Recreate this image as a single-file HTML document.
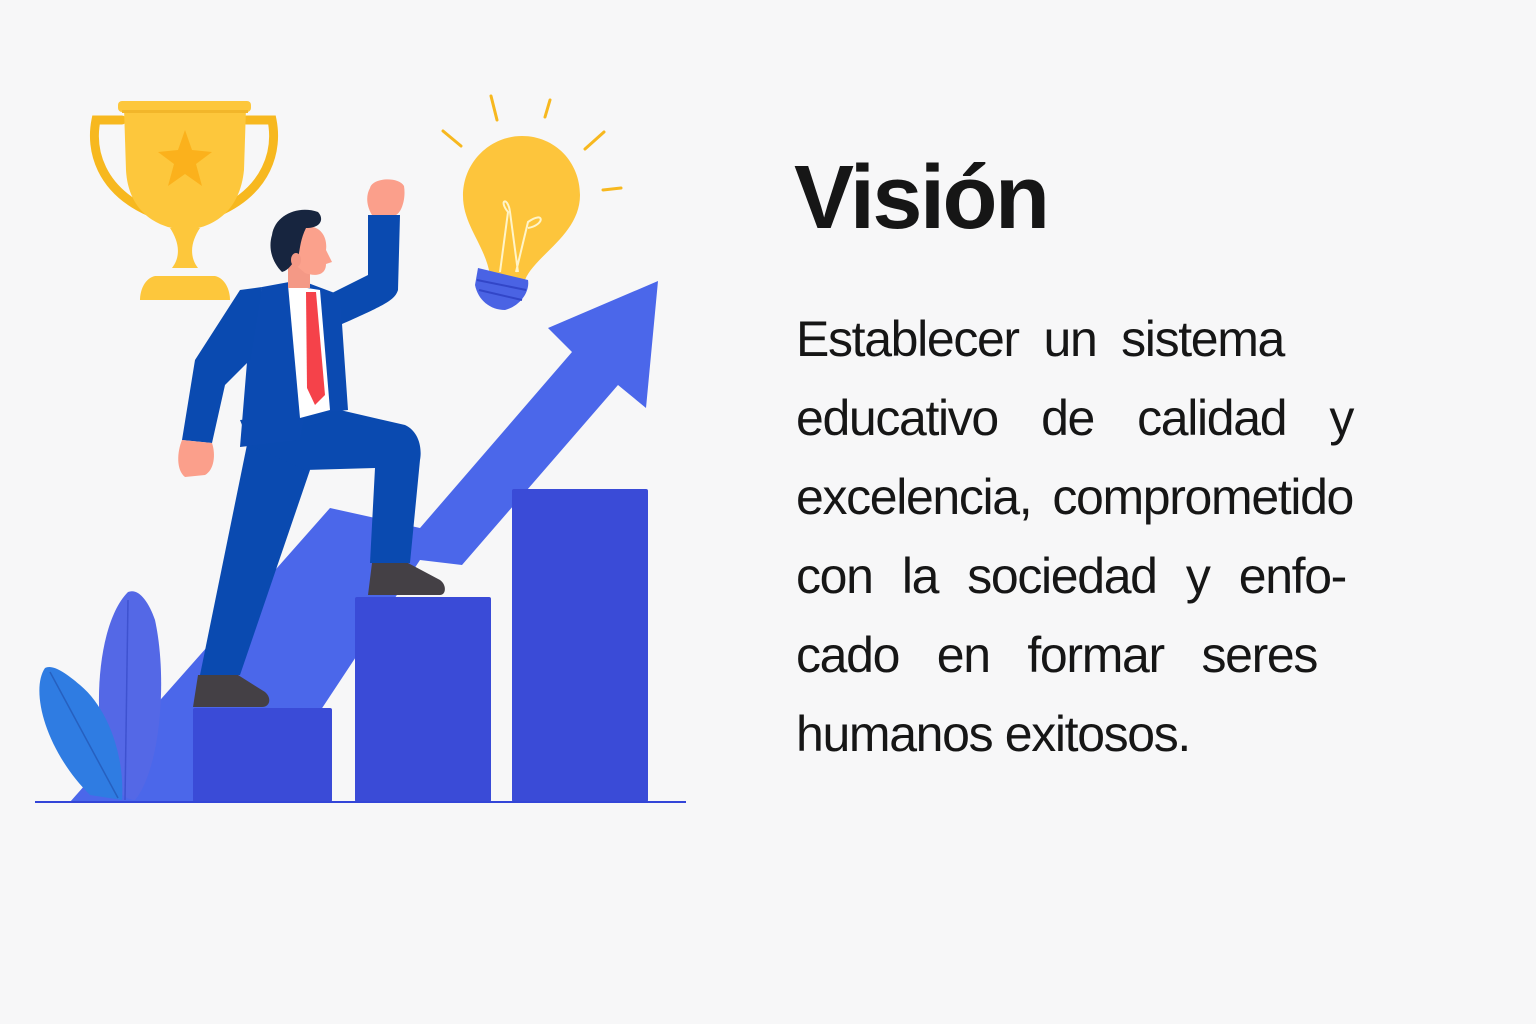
<!DOCTYPE html>
<html><head><meta charset="utf-8"><style>
html,body{margin:0;padding:0;background:#f7f7f8;}
body{width:1536px;height:1024px;position:relative;overflow:hidden;font-family:"Liberation Sans",sans-serif;color:#161616;}
h1{position:absolute;left:794px;top:143px;margin:0;font-size:90px;font-weight:700;letter-spacing:-2.5px;line-height:110px;}
.p{position:absolute;left:796px;top:300px;font-size:50px;letter-spacing:-1.35px;line-height:79px;}
.l{display:flex;justify-content:space-between;height:79px;white-space:nowrap;}
</style></head><body>
<svg width="1536" height="1024" style="position:absolute;left:0;top:0">
<polygon points="70,802 330,508 420,528 572,352 548,328 658,281 646,408 618,385 462,565 420,560 260,802" fill="#4b67ea"/>
<path d="M128,592 C100,620 92,700 105,760 C112,790 125,800 135,800 C160,770 168,680 155,620 C148,600 138,588 128,592Z" fill="#5468e6"/>
<path d="M128,600 L125,800" stroke="#3e52d0" stroke-width="1.5" fill="none"/>
<path d="M45,668 C30,690 45,750 90,795 L122,800 C125,760 110,710 80,685 C65,672 52,664 45,668Z" fill="#2f7ce2"/>
<path d="M50,672 L118,798" stroke="#2660c0" stroke-width="1.5" fill="none"/>
<rect x="193" y="708" width="139" height="94" rx="2" fill="#3a4bd7"/>
<rect x="355" y="597" width="136" height="205" rx="2" fill="#3a4bd7"/>
<rect x="512" y="489" width="136" height="313" rx="2" fill="#3a4bd7"/>
<rect x="35" y="801" width="651" height="2" fill="#3345d8"/>
<path d="M122,120 L96,120 C90,150 100,190 150,212" stroke="#f7b81f" stroke-width="9" fill="none" stroke-linecap="round"/>
<path d="M246,120 L272,120 C278,150 268,190 218,212" stroke="#f7b81f" stroke-width="9" fill="none" stroke-linecap="round"/>
<path d="M124,108 L246,108 L244,170 C240,210 215,228 185,230 C155,228 128,210 126,170Z" fill="#fdc73c"/>
<rect x="118" y="101" width="133" height="11" rx="4" fill="#fdc73c"/>
<rect x="122" y="110" width="126" height="3" fill="#f2b62a"/>
<polygon points="185,130 192,150 212,152 196,164 202,186 185,174 168,186 174,164 158,152 178,150" fill="#fbb11c"/>
<path d="M170,228 L200,228 C192,240 188,255 198,268 L172,268 C182,255 178,240 170,228Z" fill="#fdc73c"/>
<path d="M155,276 L215,276 C225,278 230,290 230,300 L140,300 C140,290 145,278 155,276Z" fill="#fdc73c"/>
<g stroke="#f7b81f" stroke-width="3" stroke-linecap="round">
<line x1="491" y1="96" x2="497" y2="120"/><line x1="550" y1="100" x2="545" y2="117"/>
<line x1="443" y1="131" x2="461" y2="146"/><line x1="604" y1="132" x2="585" y2="149"/><line x1="603" y1="190" x2="621" y2="188"/>
</g>
<path d="M522,136 C490,136 463,162 463,196 C463,225 485,245 490,275 L525,280 C535,255 580,235 580,195 C580,162 555,136 522,136Z" fill="#fdc53c"/>
<path d="M500,272 L508,212 C498,200 508,196 510,212 L518,272 M516,272 L528,222 C545,210 545,225 528,228" stroke="#fff4c8" stroke-width="2" fill="none"/>
<path d="M478,268 L528,280 C530,292 520,306 505,310 C490,310 478,300 475,285Z" fill="#4a63e4"/>
<g stroke="#3246c8" stroke-width="2"><line x1="477" y1="280" x2="526" y2="290"/><line x1="479" y1="290" x2="522" y2="300"/></g>
<polygon points="250,430 300,440 310,470 240,675 200,675" fill="#0a4ab0"/>
<path d="M240,420 L340,410 L405,425 C420,432 422,450 420,460 L410,563 L370,563 L375,468 L305,470 L250,445Z" fill="#0a4ab0"/>
<path d="M372,563 L408,563 L440,580 C447,585 446,595 440,595 L368,595Z" fill="#444045"/>
<path d="M198,675 L238,675 L265,692 C272,698 270,707 262,707 L193,707Z" fill="#444045"/>
<path d="M318,300 L368,275 L368,215 L400,215 L398,290 C395,300 385,305 340,325Z" fill="#0a4ab0"/>
<path d="M370,188 C372,178 398,176 404,186 C406,198 402,212 396,215 L372,215 C366,205 366,195 370,188Z" fill="#fb9f8b"/>
<path d="M262,287 L300,280 L340,295 L348,410 L305,415 L300,440 L240,447 L248,350Z" fill="#0b4ab1"/>
<polygon points="288,285 320,290 330,410 300,418" fill="#ffffff"/>
<polygon points="306,292 316,292 325,395 315,405 307,388" fill="#f5424a"/>
<path d="M262,287 L240,290 L195,360 L182,440 L212,443 L225,385 L250,360Z" fill="#0a4ab0"/>
<path d="M182,440 L212,443 C216,455 214,470 205,475 L185,477 C176,470 177,452 182,440Z" fill="#fb9f8b"/>
<rect x="288" y="260" width="22" height="28" fill="#f49986"/>
<path d="M300,228 C318,222 328,235 326,250 L332,262 L326,264 C326,275 316,277 305,273 L292,262 Z" fill="#fba18c"/>
<path d="M272,235 C275,215 298,205 318,212 C324,218 322,228 306,228 C300,240 300,250 298,258 C292,262 290,270 282,272 C272,262 268,248 272,235Z" fill="#17253f"/>
<ellipse cx="296" cy="260" rx="5" ry="7" fill="#f49986"/>
</svg>
<h1>Visión</h1>
<div class="p">
<div class="l" style="width:488px"><span>Establecer</span><span>un</span><span>sistema</span></div>
<div class="l" style="width:557px"><span>educativo</span><span>de</span><span>calidad</span><span>y</span></div>
<div class="l" style="width:557px"><span>excelencia,</span><span>comprometido</span></div>
<div class="l" style="width:550px"><span>con</span><span>la</span><span>sociedad</span><span>y</span><span>enfo-</span></div>
<div class="l" style="width:521px"><span>cado</span><span>en</span><span>formar</span><span>seres</span></div>
<div class="l" style="display:block">humanos exitosos.</div>
</div>
</body></html>
